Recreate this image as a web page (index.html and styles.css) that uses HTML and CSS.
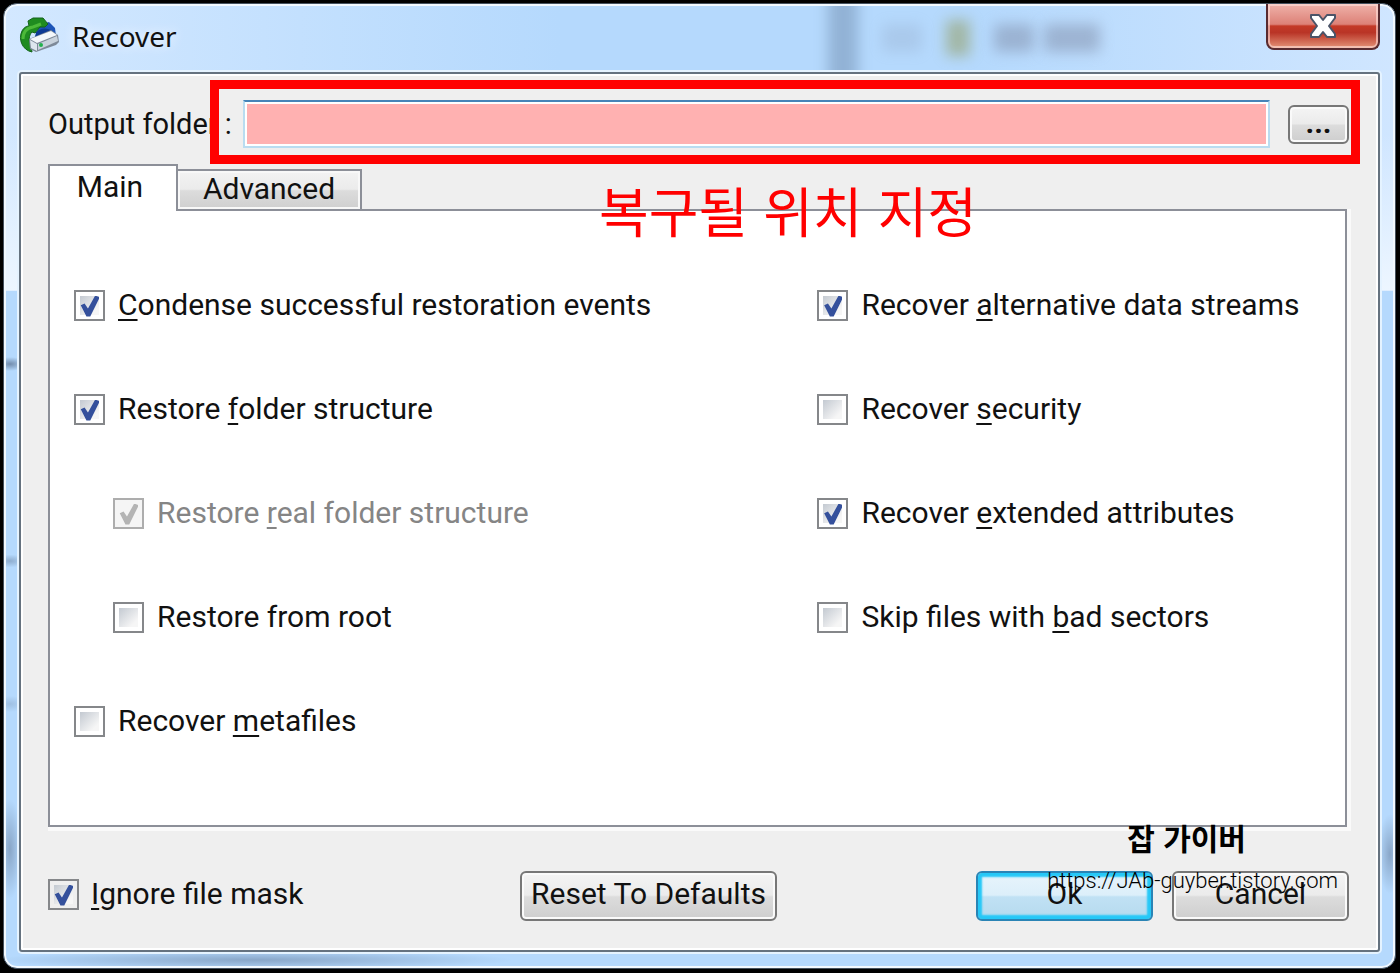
FILE: index.html
```html
<!DOCTYPE html>
<html lang="en">
<head>
    <meta charset="UTF-8">
    <meta name="viewport" content="width=device-width, initial-scale=1.0">
    <title>Recover</title>
    <link rel="stylesheet" href="styles.css">
</head>
<body>
    <main class="window">
        <!-- Title bar -->
        <header class="titlebar">
            <svg class="app-icon" viewBox="0 0 40 38" aria-hidden="true">
                <path d="M20 8 L30 5 L36 11 L37 19 L16 20 Z" fill="#1d55b8"/>
                <path d="M17 15 Q24 9 32 13 L34 18 L16 21 Z" fill="#0d3a94"/>
                <path d="M13 35 C3 33 -1 22 3 14 C5 10 8 9 10 9 L9 4 L14 1 L24 1 L29 7 L26 10 L21 10 L16 16 L13 15 C10 18 9 24 12 28 Z" fill="#1f8b20" stroke="#14631a" stroke-width="1"/>
                <path d="M4 22 C4 15 8 11 14 10 L22 7" fill="none" stroke="#4cb839" stroke-width="3"/>
                <path d="M10 22 L32 13 L39 18 L40 25 L37 28 L17 35 L11 32 Z" fill="#7d8998"/>
                <path d="M11 22 L32 14 L38 18 L18 26 Z" fill="#f3f7fb"/>
                <path d="M11 23 L18 27 L18 34 L12 31 Z" fill="#dde6ee"/>
                <path d="M19 27 L38 19 L39 24 L19 33 Z" fill="#c8d2dc"/>
                <circle cx="22" cy="28" r="2" fill="#23b14d"/>
            </svg>
            <h1 class="title">Recover</h1>
            <div class="behind" aria-hidden="true">
                <span class="smudge smudge-edge"></span>
                <span class="smudge smudge-box"></span>
                <span class="smudge smudge-lock"></span>
                <span class="smudge smudge-word"></span>
                <span class="smudge smudge-word smudge-long"></span>
            </div>
            <button type="button" class="close" aria-label="Close">
                <svg viewBox="0 0 28 24" aria-hidden="true">
                    <path d="M2 1 H10 L14 6 L18 1 H26 V4 L20 12 L26 20 V23 H18 L14 18 L10 23 H2 V20 L8 12 L2 4 Z" fill="#fff" stroke="#4b5468" stroke-width="2" stroke-linejoin="round"/>
                </svg>
            </button>
        </header>

        <form class="client">
            <!-- Output folder -->
            <div class="output">
                <label class="output-label" for="folder">Output folder :</label>
                <input class="output-field" type="text" id="folder" name="folder">
                <button type="button" class="btn browse" aria-label="Browse"><span>...</span></button>
                <div class="marker"></div>
            </div>

            <!-- Tabs -->
            <div class="tabs">
                <button type="button" class="tab active">Main</button>
                <button type="button" class="tab">Advanced</button>
                <p class="note" lang="ko">복구될 위치 지정</p>
            </div>

            <section class="panel">
                <div class="column">
                    <label class="option"><input type="checkbox" checked><span><u>C</u>ondense successful restoration events</span></label>
                    <label class="option"><input type="checkbox" checked><span>Restore <u>f</u>older structure</span></label>
                    <label class="option indent disabled"><input type="checkbox" checked disabled><span>Restore <u>r</u>eal folder structure</span></label>
                    <label class="option indent"><input type="checkbox"><span>Restore from root</span></label>
                    <label class="option"><input type="checkbox"><span>Recover <u>m</u>etafiles</span></label>
                </div>
                <div class="column">
                    <label class="option"><input type="checkbox" checked><span>Recover <u>a</u>lternative data streams</span></label>
                    <label class="option"><input type="checkbox"><span>Recover <u>s</u>ecurity</span></label>
                    <label class="option"><input type="checkbox" checked><span>Recover <u>e</u>xtended attributes</span></label>
                    <label class="option"><input type="checkbox"><span>Skip files with <u>b</u>ad sectors</span></label>
                </div>
            </section>

            <!-- Bottom buttons -->
            <footer class="actions">
                <label class="option mask"><input type="checkbox" checked><span><u>I</u>gnore file mask</span></label>
                <button type="button" class="btn reset">Reset To Defaults</button>
                <div class="confirm">
                    <button type="button" class="btn ok">Ok</button>
                    <button type="button" class="btn cancel">Cancel</button>
                </div>
                <div class="credit">
                    <strong lang="ko">잡 가이버</strong>
                    <span>https://JAb-guyber.tistory.com</span>
                </div>
            </footer>
        </form>
    </main>
</body>
</html>
```

FILE: styles.css
```css
* {
    box-sizing: border-box;
}

body {
    margin: 0;
    padding: 3px 4px 4px 3px;
    background: #000;
    color: #111;
    font-family: Roboto, "Noto Sans CJK KR", sans-serif;
    font-size: 30px;
    line-height: 40px;
}

button,
input {
    font: inherit;
    color: inherit;
    margin: 0;
}

/* Window frame */
.window {
    display: flex;
    flex-direction: column;
    min-height: calc(100vh - 7px);
    padding: 0 15px 16px;
    border: 1px solid #45515e;
    border-radius: 14px;
    background:
        radial-gradient(ellipse at 6px 360px, rgba(70, 90, 120, 0.6), transparent 16px) no-repeat,
        radial-gradient(ellipse at 6px 557px, rgba(70, 90, 120, 0.35), transparent 16px) no-repeat,
        radial-gradient(ellipse at 6px 700px, rgba(70, 90, 120, 0.2), transparent 16px) no-repeat,
        radial-gradient(12px 50px at 6px 845px, rgba(70, 90, 120, 0.4), transparent) no-repeat,
        radial-gradient(12px 40px at 1386px 850px, rgba(70, 90, 120, 0.4), transparent) no-repeat,
        radial-gradient(260px 10px at 250px 956px, rgba(70, 90, 120, 0.4), transparent) no-repeat,
        linear-gradient(180deg, transparent 130px, #edf6ff 286px, transparent 287px),
        linear-gradient(90deg, #d3e8ff, #b5d9fd 40%, #b5d9fd 70%, #d0e6ff) top / 100% 287px no-repeat,
        #b5d9fd;
    box-shadow: inset 0 0 0 2px #f2f9ff;
}

.titlebar {
    position: relative;
    display: flex;
    align-items: flex-start;
    height: 68px;
}

.app-icon {
    width: 40px;
    height: 38px;
    margin-top: 13px;
}

.title {
    flex: 1;
    margin: 12px 0 0 13px;
    font-family: "Noto Sans", sans-serif;
    font-size: 28px;
    font-weight: 400;
    text-shadow: 0 0 12px #fff;
}

/* Things seen through the glass */
.behind {
    position: absolute;
    top: 2px;
    right: 264px;
    display: flex;
    align-items: center;
    gap: 24px;
    height: 64px;
    padding: 0 16px 0 30px;
    overflow: hidden;
}

.smudge {
    width: 40px;
    height: 28px;
    background: #7f8ca8;
    opacity: 0.5;
    filter: blur(7px);
}

.smudge-edge {
    width: 30px;
    height: 100px;
    background: #6f8cae;
}

.smudge-box {
    opacity: 0.2;
}

.smudge-lock {
    width: 24px;
    height: 36px;
    background: #8f9650;
}

.smudge-long {
    width: 56px;
    margin-left: -14px;
}

.close {
    position: relative;
    display: flex;
    align-items: center;
    justify-content: center;
    width: 114px;
    height: 46px;
    padding: 0;
    border: 2px solid #582b30;
    border-top: 0;
    border-radius: 0 0 8px 8px;
    background: linear-gradient(#efb2aa, #dd8177 46%, #c43a27 50%, #b93426 65%, #e49378);
    box-shadow: inset 0 0 0 2px rgba(255, 225, 220, 0.6);
}

.close svg {
    width: 28px;
    height: 24px;
}

/* Client area */
.client {
    display: flex;
    flex: 1;
    flex-direction: column;
    padding: 6px 31px 29px 27px;
    border: 2px solid #65727f;
    border-radius: 3px;
    background: #efefef;
    box-shadow: inset 0 0 0 2px #fff, 0 0 0 2px #e5f3ff;
}

.output {
    position: relative;
    display: flex;
    align-items: center;
    height: 84px;
    margin-right: -2px;
    padding-top: 4px;
}

.output-label {
    width: 195px;
    font-size: 29px;
    white-space: nowrap;
}

.output-field {
    flex: 1;
    min-width: 0;
    height: 48px;
    border: 2px solid #b9dcf0;
    border-top-color: #4684b8;
    background: #ffb1b1;
    box-shadow: inset 0 0 0 2px #fff;
    padding: 0 8px;
}

/* Red frame round the folder field */
.marker {
    position: absolute;
    inset: 0 -11px 0 162px;
    border: 9px solid #f00;
    pointer-events: none;
}

/* Buttons */
.btn {
    height: 50px;
    padding: 0 0 4px;
    border: 2px solid #777;
    border-radius: 6px;
    background: linear-gradient(#f4f4f4, #ebebeb 48%, #dcdcdc 52%, #cecece);
    box-shadow: inset 0 0 0 2px #fafafa;
    white-space: nowrap;
}

.browse {
    width: 61px;
    height: 39px;
    margin-left: 18px;
    font-weight: 700;
    line-height: 32px;
}

.ok {
    border-color: #2a84b5;
    background: linear-gradient(#e8f4fb, #dceffa 48%, #c0e1f4 52%, #b5daee);
    box-shadow: inset 0 0 2px 4px #25c8f7;
}

/* Tabs */
.tabs {
    position: relative;
    display: flex;
    align-items: flex-end;
    height: 47px;
}

.tab {
    width: 184px;
    height: 42px;
    padding: 0 0 4px;
    border: 2px solid #8c8f98;
    border-left: 0;
    background: linear-gradient(#f3f3f3, #ebebeb 48%, #dcdcdc 52%, #cfcfcf);
    box-shadow: inset 0 0 0 2px #f8f8f8;
    line-height: 36px;
}

.tab.active {
    z-index: 1;
    width: 130px;
    height: 47px;
    padding: 0 6px 4px 0;
    border-left: 2px solid #8c8f98;
    border-bottom: 0;
    background: #fff;
    box-shadow: none;
}

.note {
    position: absolute;
    top: 16px;
    left: 551px;
    z-index: 2;
    margin: 0;
    color: #f00;
    font-family: "Noto Sans CJK KR", sans-serif;
    font-size: 54px;
    line-height: 60px;
    white-space: nowrap;
}

.panel {
    display: grid;
    grid-template-columns: 744fr 528fr;
    flex: 1;
    margin-top: -2px;
    padding: 74px 0 66px 24px;
    border: 2px solid #8c8f98;
    background: #fff;
    box-shadow: 2px 2px 0 2px #fafafa;
}

.column {
    display: flex;
    flex-direction: column;
    gap: 64px;
}

/* Checkboxes */
.option {
    display: flex;
    align-items: center;
    gap: 13px;
    white-space: nowrap;
}

.indent {
    margin-left: 39px;
}

.disabled {
    color: #858585;
}

.option u {
    text-decoration-thickness: 2px;
    text-underline-offset: 4px;
    text-decoration-skip-ink: none;
}

.option input {
    appearance: none;
    flex: none;
    width: 31px;
    height: 31px;
    border: 2px solid #85878a;
    background: linear-gradient(135deg, #c3c9d1, #f6f6f6 80%) content-box;
    padding: 4px;
    background-color: #f8f8f8;
}

.option input:checked::before {
    content: "";
    display: block;
    width: 19px;
    height: 21px;
    background: #34509c;
    clip-path: polygon(4% 46%, 24% 38%, 42% 62%, 80% 0, 104% 8%, 54% 100%, 34% 100%);
}

.option input:disabled {
    border-color: #adadad;
    background: #f5f5f5;
}

.option input:disabled::before {
    background: #b4b4b4;
}

/* Bottom row */
.actions {
    position: relative;
    display: flex;
    align-items: center;
    margin: 44px -2px 0 0;
}

.mask {
    width: 472px;
    padding-bottom: 4px;
    gap: 12px;
}

.reset {
    width: 257px;
}

.confirm {
    display: flex;
    gap: 19px;
    margin-left: auto;
}

.ok,
.cancel {
    width: 177px;
}

.credit {
    position: absolute;
    right: 11px;
    bottom: 20px;
    display: flex;
    flex-direction: column;
    align-items: center;
    font-size: 22px;
    font-weight: 300;
    color: #000;
    pointer-events: none;
}

.credit strong {
    padding: 0 12px 4px 0;
    font-family: "Noto Sans CJK KR", sans-serif;
    font-size: 30px;
    font-weight: 700;
}
```
